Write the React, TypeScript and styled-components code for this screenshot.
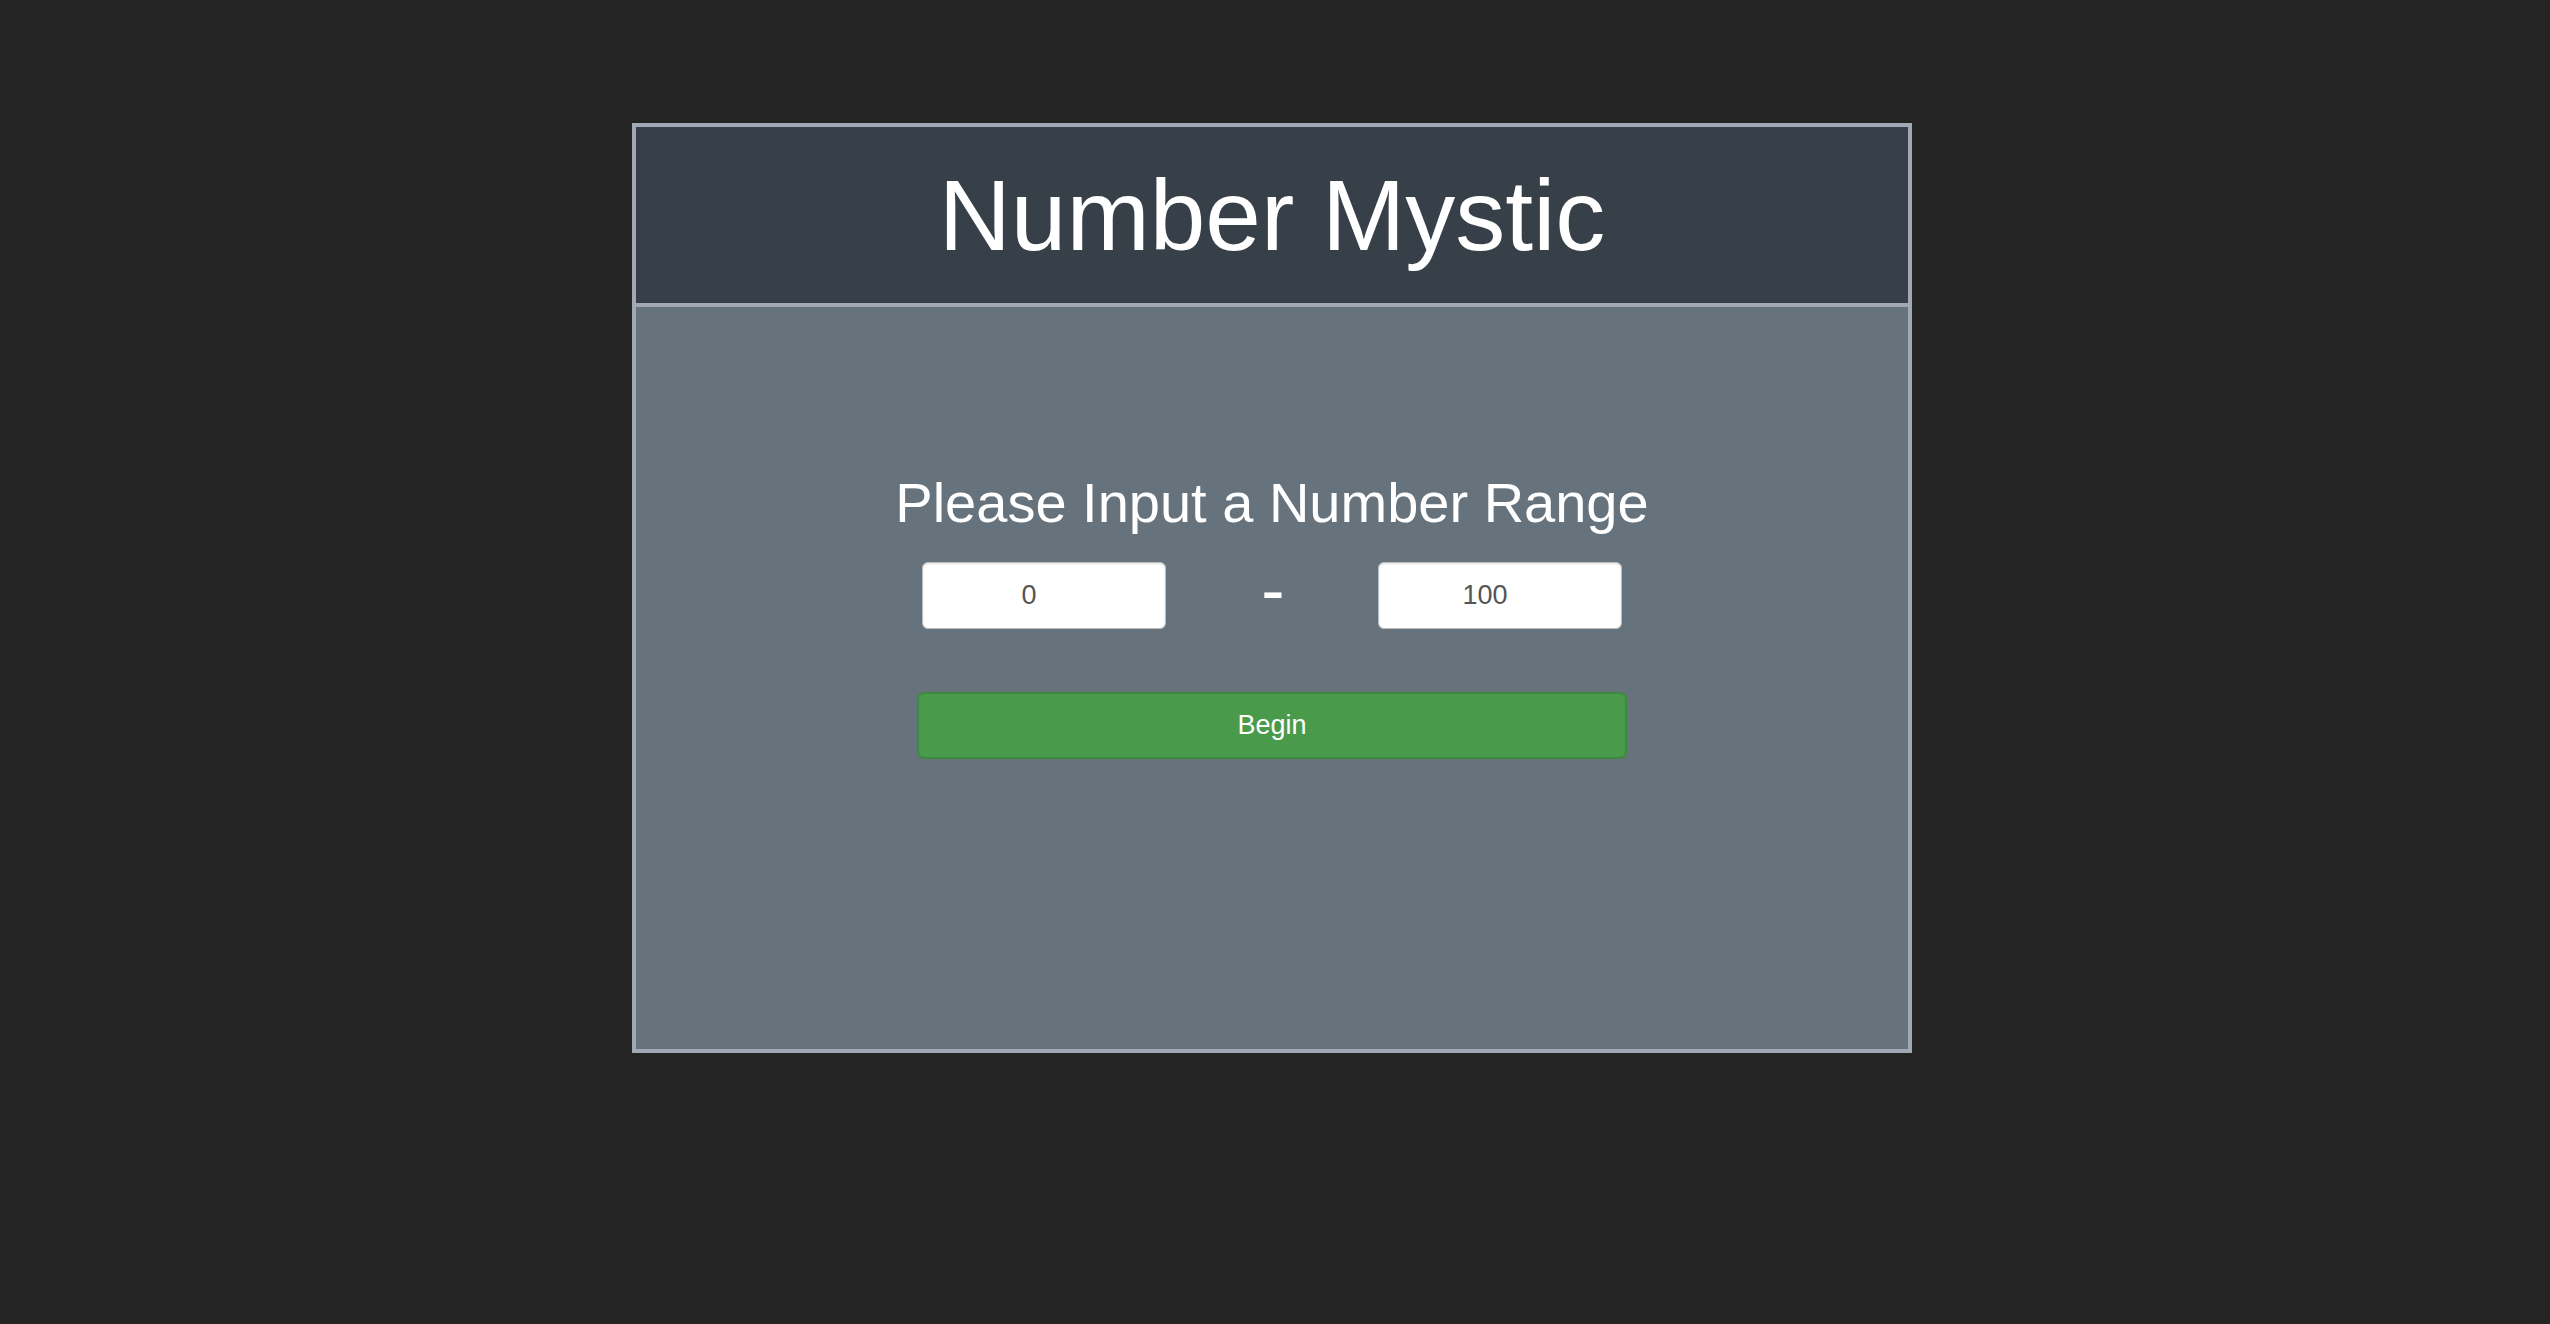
import React from "react";
import styled, { createGlobalStyle } from "styled-components";

const GlobalStyle = createGlobalStyle`
  html, body {
    margin: 0;
    padding: 0;
    background: #242424;
    font-family: "Liberation Sans", Arial, sans-serif;
  }
  * { box-sizing: border-box; }
`;

const Page = styled.div`
  display: flex;
  justify-content: center;
  padding: 123px 6px 0 0;
  min-height: 1324px;
`;

const Card = styled.div`
  width: 1280px;
  height: 930px;
  border: 4px solid #a3a9b4;
  display: flex;
  flex-direction: column;
`;

const Header = styled.header`
  height: 180px;
  flex: 0 0 auto;
  background: #373f48;
  border-bottom: 4px solid #a3a9b4;
  display: flex;
  align-items: center;
  justify-content: center;
`;

const Title = styled.h1`
  margin: 0;
  font-size: 100px;
  line-height: 1;
  font-weight: 400;
  color: #ffffff;
`;

const Body = styled.main`
  flex: 1;
  background: #66737c;
  display: flex;
  flex-direction: column;
  align-items: center;
  padding-top: 168px;
`;

const Prompt = styled.h2`
  margin: 0;
  font-size: 56px;
  line-height: 1;
  font-weight: 400;
  color: #ffffff;
`;

const RangeRow = styled.div`
  margin-top: 31px;
  width: 700px;
  height: 67px;
  display: grid;
  grid-template-columns: 244px 1fr 244px;
  align-items: center;
`;

const NumberInput = styled.input`
  height: 67px;
  width: 244px;
  border: 1px solid #bdbdbd;
  border-radius: 6px;
  background: #ffffff;
  box-shadow: inset 0 1px 2px rgba(0, 0, 0, 0.12);
  padding: 0 30px 0 0;
  text-align: center;
  font-family: "Liberation Sans", Arial, sans-serif;
  font-size: 27px;
  color: #555555;
  outline: none;
`;

const Dash = styled.span`
  text-align: center;
  font-size: 70px;
  line-height: 60px;
  color: #ffffff;
  transform: translate(1px, -6px);
`;

const BeginButton = styled.button`
  margin-top: 63px;
  width: 710px;
  height: 67px;
  background: #4a9a4c;
  border: 2px solid #3c8a3e;
  border-radius: 7px;
  color: #ffffff;
  font-family: "Liberation Sans", Arial, sans-serif;
  font-size: 27px;
  cursor: pointer;
`;

export default function App() {
  return (
    <>
      <GlobalStyle />
      <Page>
        <Card>
          <Header>
            <Title>Number Mystic</Title>
          </Header>
          <Body>
            <Prompt>Please Input a Number Range</Prompt>
            <RangeRow>
              <NumberInput type="text" defaultValue="0" />
              <Dash>-</Dash>
              <NumberInput type="text" defaultValue="100" />
            </RangeRow>
            <BeginButton>Begin</BeginButton>
          </Body>
        </Card>
      </Page>
    </>
  );
}
